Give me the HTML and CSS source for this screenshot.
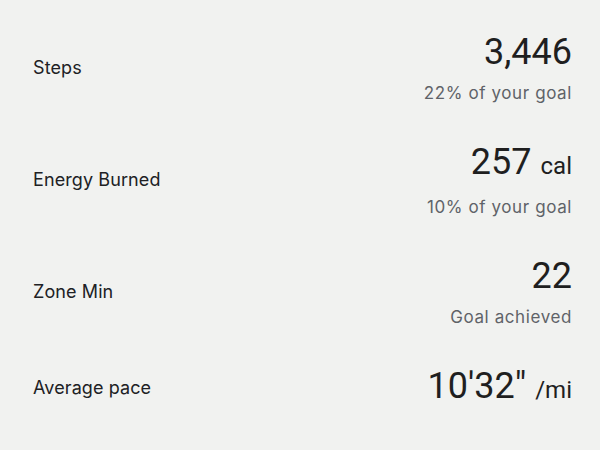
FILE: index.html
```html
<!DOCTYPE html>
<html lang="en">

<head>
    <meta charset="UTF-8">
    <meta name="viewport" content="width=device-width, initial-scale=1.0">
    <title>Activity</title>
    <link rel="stylesheet" href="styles.css">
</head>

<body>
    <div class="stats">
        <div class="stat">
            <div class="label">Steps</div>
            <div class="info">
                <div class="value">3,446</div>
                <div class="note">22% of your goal</div>
            </div>
        </div>

        <div class="stat">
            <div class="label">Energy Burned</div>
            <div class="info">
                <div class="value">257<span class="unit">cal</span></div>
                <div class="note">10% of your goal</div>
            </div>
        </div>

        <div class="stat">
            <div class="label">Zone Min</div>
            <div class="info">
                <div class="value">22</div>
                <div class="note">Goal achieved</div>
            </div>
        </div>

        <div class="stat">
            <div class="label">Average pace</div>
            <div class="info">
                <div class="value">10'32"<span class="unit">/mi</span></div>
            </div>
        </div>
    </div>
</body>

</html>
```

FILE: styles.css
```css
body {
    margin: 0;
    padding: 0;
    background: #f1f2f0;
    font-family: Inter, "Noto Sans", sans-serif;
    color: #1f1f1f;
}

.stats {
    display: flex;
    flex-direction: column;
    padding: 13px 28px 0 33px;
}

.stat {
    display: flex;
    justify-content: space-between;
    align-items: center;
    padding: 18px 0;
}

.label {
    font-size: 18px;
    line-height: 24px;
    letter-spacing: 0.1px;
    color: #202124;
}

.info {
    text-align: right;
}

.value {
    font-family: Roboto, sans-serif;
    font-size: 36px;
    line-height: 42px;
    color: #1f1f1f;
}

.unit {
    margin-left: 9px;
    font-size: 24px;
}

.note {
    margin-top: 8px;
    font-size: 17px;
    line-height: 24px;
    letter-spacing: 0.6px;
    color: #5f6368;
}
```
